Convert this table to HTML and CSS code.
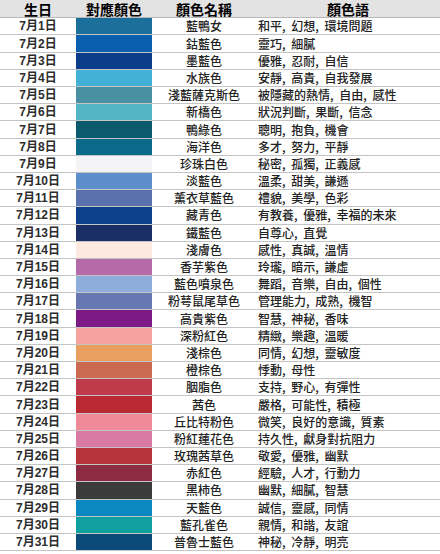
FILE: index.html
```html
<!DOCTYPE html>
<html lang="zh-Hant">
<head>
<meta charset="utf-8">
<link rel="stylesheet" href="styles.css">
</head>
<body>
<div class="table">
  <div class="row head">
    <div class="c date">生日</div>
    <div class="c sw">對應顏色</div>
    <div class="c name">顏色名稱</div>
    <div class="c mean-h">顏色語</div>
  </div>
  <div class="row"><div class="c date">7月1日</div><div class="swatch" style="background:#1a6f9b"></div><div class="c name">藍鴨女</div><div class="c mean">和平, 幻想, 環境問題</div></div>
  <div class="row"><div class="c date">7月2日</div><div class="swatch" style="background:#0a5fae"></div><div class="c name">鈷藍色</div><div class="c mean">靈巧, 細膩</div></div>
  <div class="row"><div class="c date">7月3日</div><div class="swatch" style="background:#0b3d8b"></div><div class="c name">墨藍色</div><div class="c mean">優雅, 忍耐, 自信</div></div>
  <div class="row"><div class="c date">7月4日</div><div class="swatch" style="background:#43b1d5"></div><div class="c name">水族色</div><div class="c mean">安靜, 高貴, 自我發展</div></div>
  <div class="row"><div class="c date">7月5日</div><div class="swatch" style="background:#4a90a3"></div><div class="c name">淺藍薩克斯色</div><div class="c mean">被隱藏的熱情, 自由, 感性</div></div>
  <div class="row"><div class="c date">7月6日</div><div class="swatch" style="background:#52b5c6"></div><div class="c name">新橋色</div><div class="c mean">狀況判斷, 果斷, 信念</div></div>
  <div class="row"><div class="c date">7月7日</div><div class="swatch" style="background:#0b5a6d"></div><div class="c name">鴨綠色</div><div class="c mean">聰明, 抱負, 機會</div></div>
  <div class="row"><div class="c date">7月8日</div><div class="swatch" style="background:#0b698a"></div><div class="c name">海洋色</div><div class="c mean">多才, 努力, 平靜</div></div>
  <div class="row"><div class="c date">7月9日</div><div class="swatch" style="background:#f4f4f6"></div><div class="c name">珍珠白色</div><div class="c mean">秘密, 孤獨, 正義感</div></div>
  <div class="row"><div class="c date">7月10日</div><div class="swatch" style="background:#5b8ecb"></div><div class="c name">淡藍色</div><div class="c mean">溫柔, 甜美, 謙遜</div></div>
  <div class="row"><div class="c date">7月11日</div><div class="swatch" style="background:#5a71ae"></div><div class="c name">薰衣草藍色</div><div class="c mean">禮貌, 美學, 色彩</div></div>
  <div class="row"><div class="c date">7月12日</div><div class="swatch" style="background:#0d408a"></div><div class="c name">藏青色</div><div class="c mean">有教養, 優雅, 幸福的未來</div></div>
  <div class="row"><div class="c date">7月13日</div><div class="swatch" style="background:#1b2f66"></div><div class="c name">鐵藍色</div><div class="c mean">自尊心, 直覺</div></div>
  <div class="row"><div class="c date">7月14日</div><div class="swatch" style="background:#fde9e0"></div><div class="c name">淺膚色</div><div class="c mean">感性, 真誠, 溫情</div></div>
  <div class="row"><div class="c date">7月15日</div><div class="swatch" style="background:#b46ba7"></div><div class="c name">香芋紫色</div><div class="c mean">玲瓏, 暗示, 謙虛</div></div>
  <div class="row"><div class="c date">7月16日</div><div class="swatch" style="background:#8eaddb"></div><div class="c name">藍色噴泉色</div><div class="c mean">舞蹈, 音樂, 自由, 個性</div></div>
  <div class="row"><div class="c date">7月17日</div><div class="swatch" style="background:#6777b1"></div><div class="c name">粉萼鼠尾草色</div><div class="c mean">管理能力, 成熟, 機智</div></div>
  <div class="row"><div class="c date">7月18日</div><div class="swatch" style="background:#7d1a86"></div><div class="c name">高貴紫色</div><div class="c mean">智慧, 神秘, 香味</div></div>
  <div class="row"><div class="c date">7月19日</div><div class="swatch" style="background:#f4a19f"></div><div class="c name">深粉紅色</div><div class="c mean">精緻, 樂趣, 溫暖</div></div>
  <div class="row"><div class="c date">7月20日</div><div class="swatch" style="background:#e89f5f"></div><div class="c name">淺棕色</div><div class="c mean">同情, 幻想, 靈敏度</div></div>
  <div class="row"><div class="c date">7月21日</div><div class="swatch" style="background:#cb6a50"></div><div class="c name">橙棕色</div><div class="c mean">悸動, 母性</div></div>
  <div class="row"><div class="c date">7月22日</div><div class="swatch" style="background:#bf3a4a"></div><div class="c name">胭脂色</div><div class="c mean">支持, 野心, 有彈性</div></div>
  <div class="row"><div class="c date">7月23日</div><div class="swatch" style="background:#ba2a32"></div><div class="c name">茜色</div><div class="c mean">嚴格, 可能性, 積極</div></div>
  <div class="row"><div class="c date">7月24日</div><div class="swatch" style="background:#f08a98"></div><div class="c name">丘比特粉色</div><div class="c mean">微笑, 良好的意識, 質素</div></div>
  <div class="row"><div class="c date">7月25日</div><div class="swatch" style="background:#d97aa5"></div><div class="c name">粉紅蓮花色</div><div class="c mean">持久性, 獻身對抗阻力</div></div>
  <div class="row"><div class="c date">7月26日</div><div class="swatch" style="background:#b8343d"></div><div class="c name">玫瑰茜草色</div><div class="c mean">敬愛, 優雅, 幽默</div></div>
  <div class="row"><div class="c date">7月27日</div><div class="swatch" style="background:#8c2b41"></div><div class="c name">赤紅色</div><div class="c mean">經驗, 人才, 行動力</div></div>
  <div class="row"><div class="c date">7月28日</div><div class="swatch" style="background:#3b3b3c"></div><div class="c name">黑柿色</div><div class="c mean">幽默, 細膩, 智慧</div></div>
  <div class="row"><div class="c date">7月29日</div><div class="swatch" style="background:#0b88bf"></div><div class="c name">天藍色</div><div class="c mean">誠信, 靈感, 同情</div></div>
  <div class="row"><div class="c date">7月30日</div><div class="swatch" style="background:#10a09f"></div><div class="c name">藍孔雀色</div><div class="c mean">親情, 和諧, 友誼</div></div>
  <div class="row"><div class="c date">7月31日</div><div class="swatch" style="background:#0c4a79"></div><div class="c name">普魯士藍色</div><div class="c mean">神秘, 冷靜, 明亮</div></div>
</div>
</body>
</html>
```
FILE: styles.css
```css
html, body {
  margin: 0;
  padding: 0;
  background: #ffffff;
}

body {
  width: 440px;
  height: 554px;
  overflow: hidden;
  font-family: "Noto Sans CJK TC", "Noto Sans CJK SC", sans-serif;
  color: #1e1e1e;
}

.table {
  display: flex;
  flex-direction: column;
}

.row {
  display: grid;
  grid-template-columns: 76px 76px 104px 184px;
  height: 17.2px;
  box-sizing: border-box;
  border-bottom: 1px solid #c4c4c4;
  align-items: center;
}

.row.head {
  height: 18.3px;
  background: #e3e3e3;
  border-bottom: 1px solid #b8b8b8;
  font-weight: 700;
  font-size: 14px;
  color: #000;
}

.c {
  white-space: nowrap;
  line-height: 16px;
}

.date {
  text-align: center;
  font-family: "Liberation Sans", "Noto Sans CJK TC", sans-serif;
  font-weight: 700;
  font-size: 12px;
  color: #2c2c2c;
}

.head .date,
.head .sw,
.head .name,
.head .mean-h {
  font-family: "Noto Sans CJK TC", sans-serif;
  font-size: 14px;
  font-weight: 700;
  color: #000;
  text-align: center;
}

.swatch {
  align-self: stretch;
}

.name {
  text-align: center;
  font-size: 12px;
  font-weight: 500;
  color: #222;
}

.mean {
  padding-left: 2px;
  font-size: 12px;
  font-weight: 500;
  word-spacing: 3px;
  color: #222;
}
```
